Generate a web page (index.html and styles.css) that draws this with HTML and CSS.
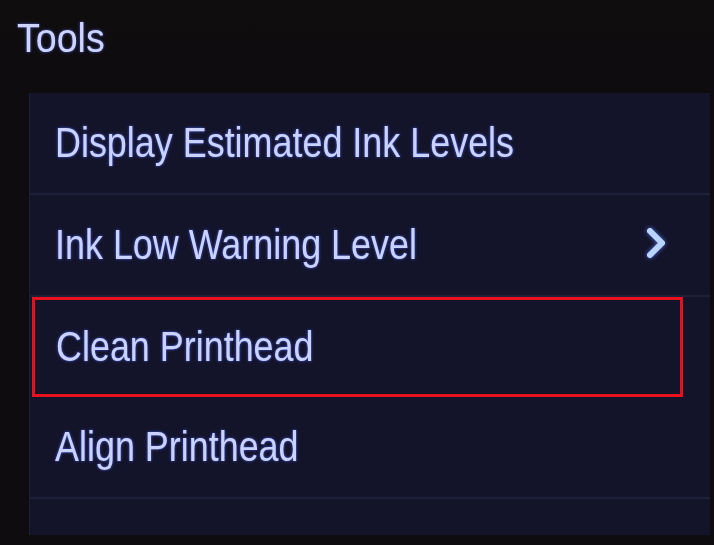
FILE: index.html
```html
<!DOCTYPE html>
<html>
<head>
<meta charset="utf-8">
<link rel="stylesheet" href="styles.css">
</head>
<body>
<div class="screen">
  <header class="title"><span class="title-text">Tools</span></header>
  <div class="panel">
    <div class="row"><span class="label">Display Estimated Ink Levels</span></div>
    <div class="row"><span class="label">Ink Low Warning Level</span>
      <svg class="chev" width="26" height="34" viewBox="0 0 26 34"><path d="M6 5 L18 17 L6 29" fill="none" stroke="#b8d4ff" stroke-width="6" stroke-linecap="round" stroke-linejoin="round"/></svg>
    </div>
    <div class="row selected"><span class="label">Clean Printhead</span></div>
    <div class="row"><span class="label">Align Printhead</span></div>
    <div class="row partial"></div>
  </div>
</div>
</body>
</html>
```

FILE: styles.css
```css
html, body {
  margin: 0;
  padding: 0;
  background: #0d0b0c;
}
.screen {
  width: 714px;
  height: 545px;
  overflow: hidden;
  background: linear-gradient(#100d0e, #0e0c0f 90px);
  font-family: "Liberation Sans", Arial, sans-serif;
  color: #c0caff;
}
.title {
  height: 93px;
  box-sizing: border-box;
  padding: 14px 0 0 17px;
  font-size: 40px;
  line-height: 48px;
}
.title-text {
  display: inline-block;
  transform: scaleX(0.94);
  transform-origin: left center;
  color: #ccd4ff;
  text-shadow: 0 0 3px rgba(90, 110, 255, 0.8);
}
.panel {
  margin-left: 29px;
  margin-right: 4px;
  height: 442px;
  background: #13142a;
  border-left: 1px solid #1c1e36;
  display: flex;
  flex-direction: column;
}
.row {
  height: 102px;
  flex: none;
  box-sizing: border-box;
  border-bottom: 2px solid #1d2038;
  display: flex;
  align-items: center;
  padding: 0 0 0 25px;
  position: relative;
}
.label {
  display: inline-block;
  font-size: 42px;
  line-height: 48px;
  white-space: nowrap;
  transform: scaleX(0.855);
  transform-origin: left center;
  color: #cad3ff;
  text-shadow: 0 0 3px rgba(80, 100, 255, 0.9);
}
.chev {
  position: absolute;
  left: 614px;
  top: 31px;
  filter: drop-shadow(0 0 2px rgba(90, 120, 255, 0.9));
}
.selected {
  margin-left: 2px;
  margin-right: 27px;
  padding-left: 21px;
  border: 3px solid #e8101c;
  height: 100px;
}
.partial {
  height: 33px;
  border-bottom: none;
}
```
